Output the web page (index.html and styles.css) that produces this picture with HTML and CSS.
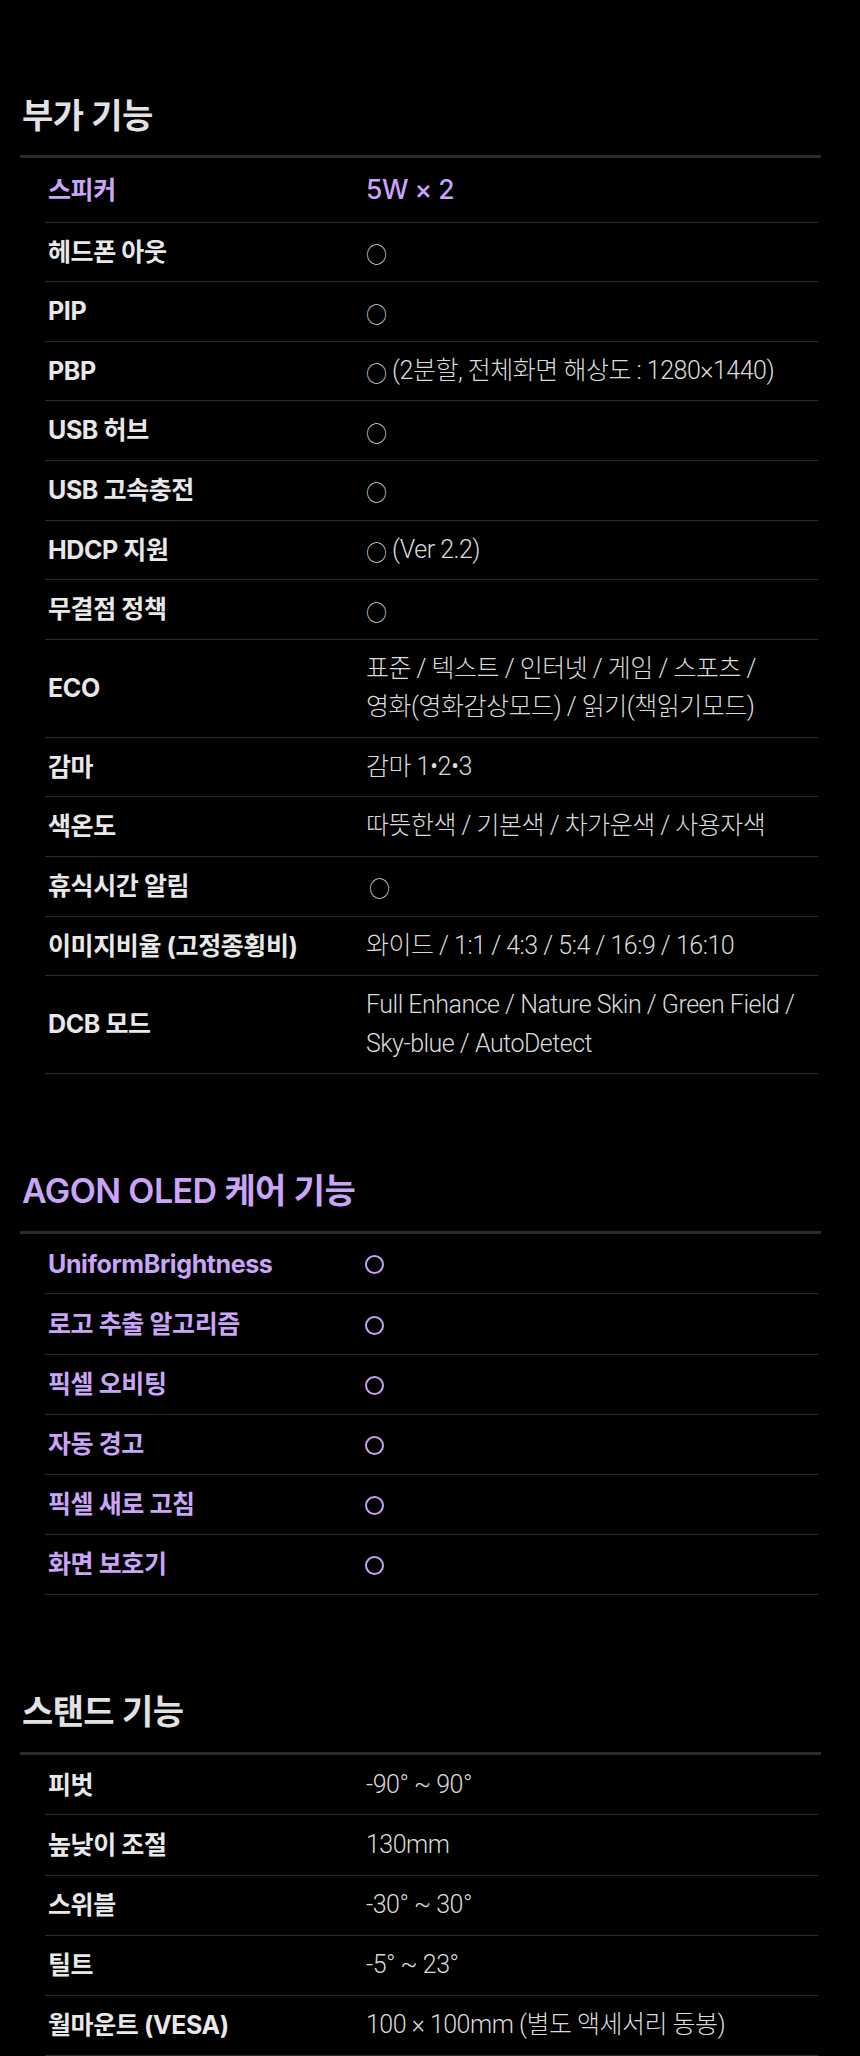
FILE: index.html
```html
<!DOCTYPE html>
<html lang="ko">
<head>
<meta charset="utf-8">
<title>스펙</title>
<link rel="stylesheet" href="styles.css">
</head>
<body>
<section class="section">
  <h2 class="title">부가 기능</h2>
  <div class="table">
    <div class="row accent big"><div class="label">스피커</div><div class="value">5W × 2</div></div>
    <div class="row"><div class="label">헤드폰 아웃</div><div class="value"><span class="mark">○</span></div></div>
    <div class="row"><div class="label">PIP</div><div class="value"><span class="mark">○</span></div></div>
    <div class="row"><div class="label">PBP</div><div class="value"><span class="mark">○</span> (2분할, 전체화면 해상도 : 1280×1440)</div></div>
    <div class="row"><div class="label">USB 허브</div><div class="value"><span class="mark">○</span></div></div>
    <div class="row"><div class="label">USB 고속충전</div><div class="value"><span class="mark">○</span></div></div>
    <div class="row"><div class="label">HDCP 지원</div><div class="value"><span class="mark">○</span> (Ver 2.2)</div></div>
    <div class="row"><div class="label">무결점 정책</div><div class="value"><span class="mark">○</span></div></div>
    <div class="row"><div class="label">ECO</div><div class="value">표준 / 텍스트 / 인터넷 / 게임 / 스포츠 /<br>영화(영화감상모드) / 읽기(책읽기모드)</div></div>
    <div class="row"><div class="label">감마</div><div class="value">감마 1•2•3</div></div>
    <div class="row"><div class="label">색온도</div><div class="value">따뜻한색 / 기본색 / 차가운색 / 사용자색</div></div>
    <div class="row"><div class="label">휴식시간 알림</div><div class="value"><span class="mark nudge">○</span></div></div>
    <div class="row"><div class="label">이미지비율 (고정종횡비)</div><div class="value">와이드 / 1:1 / 4:3 / 5:4 / 16:9 / 16:10</div></div>
    <div class="row"><div class="label">DCB 모드</div><div class="value">Full Enhance / Nature Skin / Green Field /<br>Sky-blue / AutoDetect</div></div>
  </div>
</section>

<section class="section">
  <h2 class="title accent-title">AGON OLED 케어 기능</h2>
  <div class="table loose">
    <div class="row accent"><div class="label">UniformBrightness</div><div class="value"><span class="ring" aria-label="○"></span></div></div>
    <div class="row accent"><div class="label">로고 추출 알고리즘</div><div class="value"><span class="ring" aria-label="○"></span></div></div>
    <div class="row accent"><div class="label">픽셀 오비팅</div><div class="value"><span class="ring" aria-label="○"></span></div></div>
    <div class="row accent"><div class="label">자동 경고</div><div class="value"><span class="ring" aria-label="○"></span></div></div>
    <div class="row accent"><div class="label">픽셀 새로 고침</div><div class="value"><span class="ring" aria-label="○"></span></div></div>
    <div class="row accent"><div class="label">화면 보호기</div><div class="value"><span class="ring" aria-label="○"></span></div></div>
  </div>
</section>

<section class="section">
  <h2 class="title">스탠드 기능</h2>
  <div class="table loose">
    <div class="row"><div class="label">피벗</div><div class="value">-90° ~ 90°</div></div>
    <div class="row"><div class="label">높낮이 조절</div><div class="value">130mm</div></div>
    <div class="row"><div class="label">스위블</div><div class="value">-30° ~ 30°</div></div>
    <div class="row"><div class="label">틸트</div><div class="value">-5° ~ 23°</div></div>
    <div class="row"><div class="label">월마운트 (VESA)</div><div class="value">100 × 100mm (별도 액세서리 동봉)</div></div>
  </div>
</section>
</body>
</html>
```
FILE: styles.css
```css
html, body {
  margin: 0;
  padding: 0;
  background: #000;
}

body {
  font-family: Inter, "Noto Sans CJK KR", sans-serif;
  color: #e6e6e6;
}

.section {
  padding: 95.5px 39px 0 20px;
}

.section + .section {
  padding-top: 96.5px;
}

.section + .section .title {
  margin-bottom: 20.5px;
}

.title {
  margin: 0 0 19.5px 2px;
  font-size: 34px;
  line-height: 40px;
  font-weight: 600;
  color: #e2e2e2;
  letter-spacing: -0.6px;
}

.accent-title {
  color: #caa5f7;
}

.table {
  border-top: 3px solid #2c2c2c;
  padding: 0 3px 0 25px;
}

.row {
  display: grid;
  grid-template-columns: 321px 1fr;
  align-items: center;
  padding: 10.1px 0;
  border-bottom: 1px solid #2a2a2a;
}

.loose .row {
  padding: 10.4px 0;
}

.label {
  padding-left: 3px;
  font-size: 25px;
  line-height: 38.4px;
  font-weight: 700;
  color: #e8e8e8;
  letter-spacing: -0.4px;
}

.value {
  font-family: Roboto, "Noto Sans CJK KR", sans-serif;
  font-size: 25px;
  line-height: 38.4px;
  font-weight: 300;
  color: #dadada;
  letter-spacing: -0.5px;
}

.accent .label,
.accent .value {
  color: #caa5f7;
}

.big .value {
  font-family: Inter, "Noto Sans CJK KR", sans-serif;
  font-size: 26.5px;
  line-height: 43.4px;
  font-weight: 500;
}

.mark {
  display: inline-block;
  font-family: "Noto Sans CJK KR", sans-serif;
  font-size: 21px;
  line-height: 20px;
  font-weight: 300;
  vertical-align: middle;
}

.ring {
  display: inline-block;
  box-sizing: border-box;
  width: 19px;
  height: 19px;
  margin-left: -1px;
  border: 2.5px solid #c7a0f3;
  border-radius: 50%;
  vertical-align: middle;
}

.nudge {
  padding-left: 3px;
}
```
